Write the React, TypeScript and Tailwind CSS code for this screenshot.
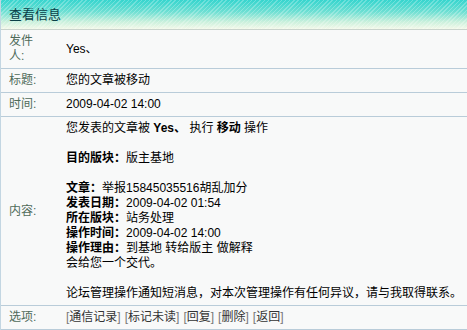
function Row({ label, children }: { label: string; children: React.ReactNode }) {
  return (
    <div className="flex items-center border-b border-[#b9ccd9]">
      <div className="w-[58px] shrink-0 pl-2 pr-[18px] py-1 text-[#4f6b59]">{label}</div>
      <div className="flex-1 pl-[7px] py-1 text-black">{children}</div>
    </div>
  );
}

function Field({ name, value }: { name: string; value: string }) {
  return (
    <div>
      <b>{name}：</b>
      {value}
    </div>
  );
}

export default function App() {
  const actions = ["通信记录", "标记未读", "回复", "删除", "返回"];

  return (
    <div className="w-[467px] h-[330px] overflow-hidden bg-[#f8f9f9] border-l border-[#c3d6e2] text-[12px] leading-[15px] font-['Liberation_Sans','Noto_Sans_CJK_SC',sans-serif]">
      <div className="h-[30px] flex items-center pl-2 border-b border-[#c9d3cc] text-[13px] text-[#0a3f47] bg-[image:repeating-linear-gradient(135deg,rgba(255,255,255,0.25)_0px,rgba(255,255,255,0.25)_1px,transparent_1px,transparent_3px),linear-gradient(to_bottom,#36d5ce_0%,#6cdfd3_40%,#c9f0dc_75%,#f3f9ea_100%)]">
        查看信息
      </div>

      <Row label="发件人:">Yes、</Row>
      <Row label="标题:">您的文章被移动</Row>
      <Row label="时间:">2009-04-02 14:00</Row>
      <Row label="内容:">
        <div>
          您发表的文章被 <b>Yes、</b> 执行 <b>移动</b> 操作
        </div>
        <div className="h-[15px]" />
        <Field name="目的版块" value="版主基地" />
        <div className="h-[15px]" />
        <Field name="文章" value="举报15845035516胡乱加分" />
        <Field name="发表日期" value="2009-04-02 01:54" />
        <Field name="所在版块" value="站务处理" />
        <Field name="操作时间" value="2009-04-02 14:00" />
        <Field name="操作理由" value="到基地 转给版主 做解释" />
        <div>会给您一个交代。</div>
        <div className="h-[15px]" />
        <div className="whitespace-nowrap">论坛管理操作通知短消息，对本次管理操作有任何异议，请与我取得联系。</div>
      </Row>
      <Row label="选项:">
        <div className="flex gap-[4px] text-[#333]">
          {actions.map((a) => (
            <span key={a}>
              <span className="text-[#777]">[</span>
              {a}
              <span className="text-[#777]">]</span>
            </span>
          ))}
        </div>
      </Row>
    </div>
  );
}
